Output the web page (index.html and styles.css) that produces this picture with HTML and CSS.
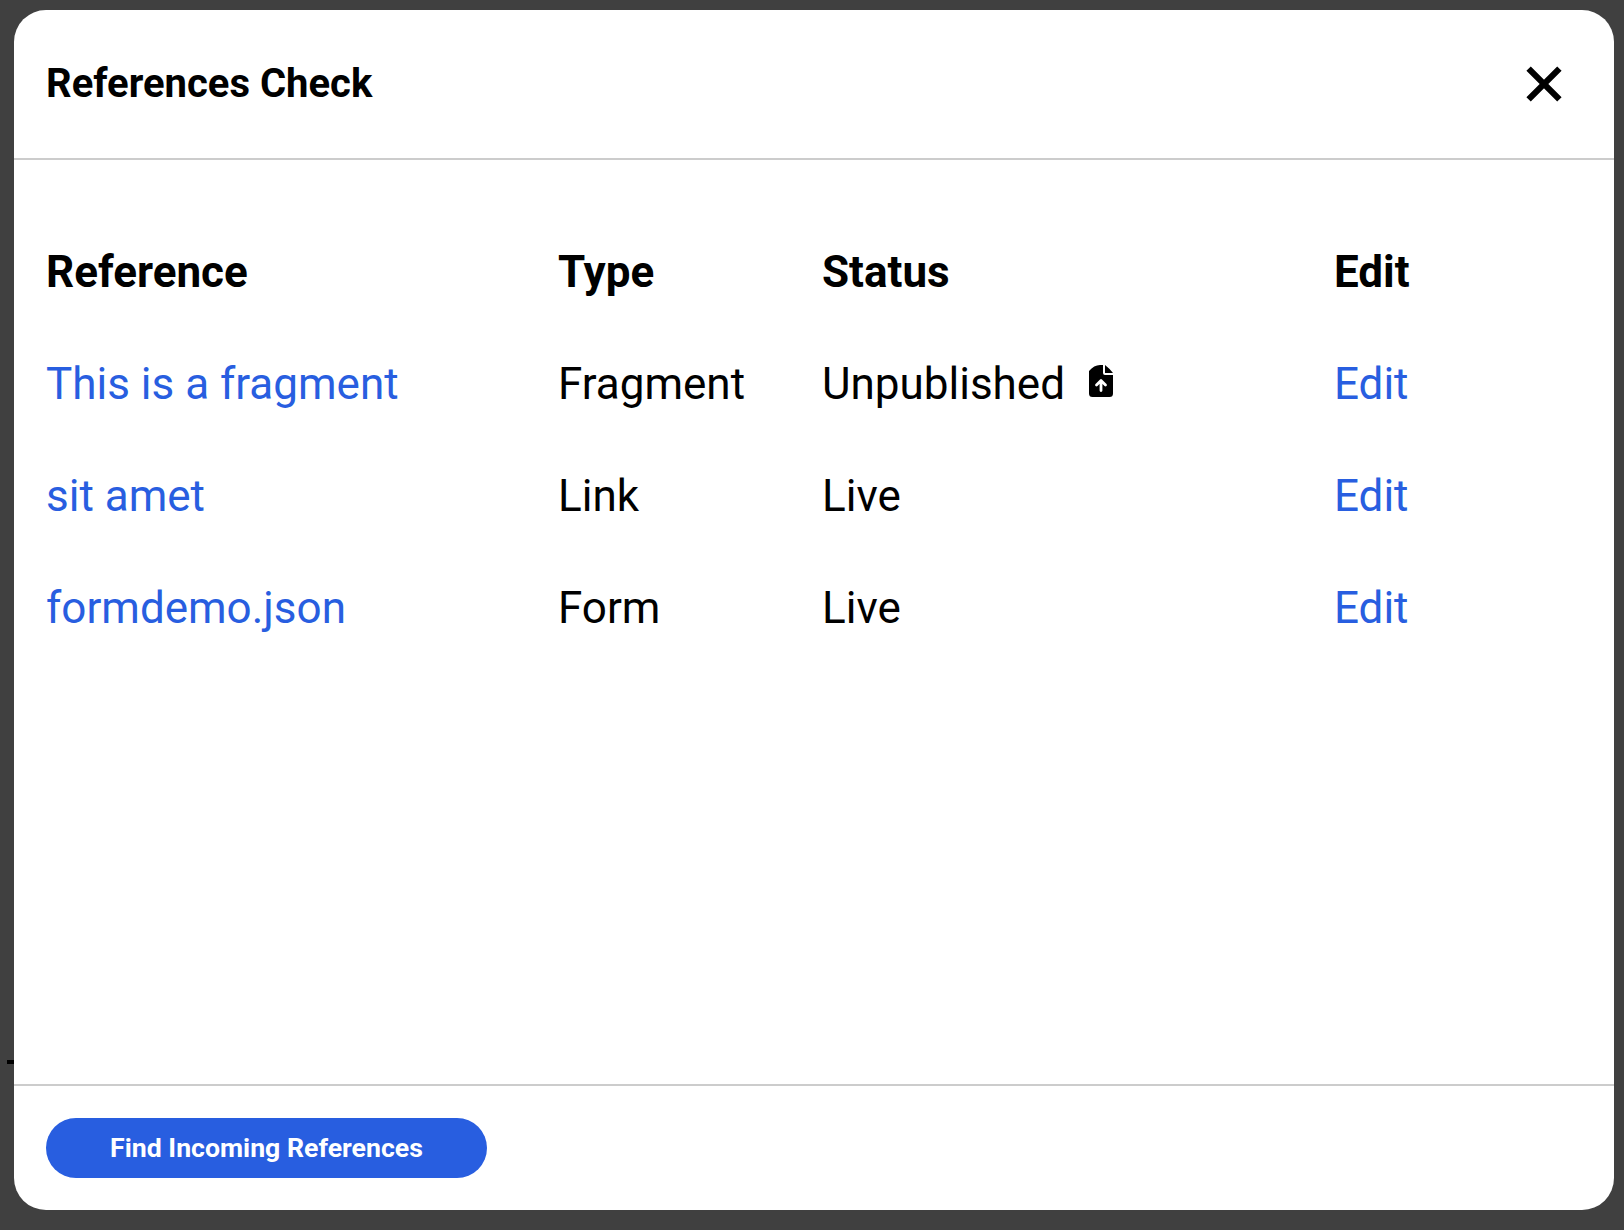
FILE: index.html
```html
<!DOCTYPE html>
<html lang="en">
<head>
<meta charset="utf-8">
<title>References Check</title>
<link rel="stylesheet" href="styles.css">
</head>
<body>
<main class="dialog">
  <header class="header">
    <h1 class="title">References Check</h1>
    <button class="close" aria-label="Close"><svg width="36" height="36" viewBox="0 0 36 36"><path d="M2.600 2.600 33.400 33.400M33.400 2.600 2.600 33.400" stroke="#000" stroke-width="6.200"/></svg></button>
  </header>
  <section class="content">
    <div class="row head"><span>Reference</span><span>Type</span><span>Status</span><span>Edit</span></div>
    <div class="row"><a>This is a fragment</a><span>Fragment</span><span class="status">Unpublished<svg class="file" width="24" height="32" viewBox="0 0 24 32"><path fill="#000" d="M14 0V8Q14 10 16 10H24V28.500Q24 32 20.500 32H3.500Q0 32 0 28.500V6Q5 0 11 0ZM16 0Q20 3 24 8H16Z"/><path d="M12 25.500V16M7.500 20 12 15.500 16.500 20" fill="none" stroke="#fff" stroke-width="2.800" stroke-linecap="round" stroke-linejoin="round"/></svg></span><a>Edit</a></div>
    <div class="row"><a>sit amet</a><span>Link</span><span>Live</span><a>Edit</a></div>
    <div class="row"><a>formdemo.json</a><span>Form</span><span>Live</span><a>Edit</a></div>
  </section>
  <footer class="footer"><button class="find">Find Incoming References</button></footer>
</main>
<i class="dash"></i>
</body>
</html>
```
FILE: styles.css
```css
* { box-sizing: border-box; }
body { margin: 0; height: 1230px; padding: 10px 10px 20px 14px; background: #404040; font-family: Roboto, sans-serif; color: #000; overflow: hidden; }
.dialog { height: 1200px; background: #fff; border-radius: 32px; display: flex; flex-direction: column; }
.header { height: 150px; border-bottom: 2px solid #ccc; padding: 0 52px 0 32px; display: flex; align-items: center; justify-content: space-between; }
.title { margin: 0; font-size: 40px; line-height: 48px; font-weight: 700; }
button { border: 0; font-family: inherit; }
.close { padding: 0; background: none; display: flex; }
.content { flex: 1; padding: 56px 32px 0; }
.row { display: grid; grid-template-columns: 512px 264px 512px 1fr; height: 112px; align-items: center; font-size: 44px; line-height: 56px; }
.head { font-weight: 700; }
a { color: #285ee0; }
.status { display: flex; align-items: center; }
.file { margin: 0 0 6px 24px; }
.footer { height: 126px; border-top: 2px solid #ccc; padding: 32px; }
.find { display: block; width: 441px; height: 60px; padding: 0; border-radius: 30px; background: #285ee0; color: #fff; font-size: 26.66px; font-weight: 700; }
.dash { position: absolute; left: 7px; top: 1060px; width: 7px; height: 4px; background: #000; }
```
